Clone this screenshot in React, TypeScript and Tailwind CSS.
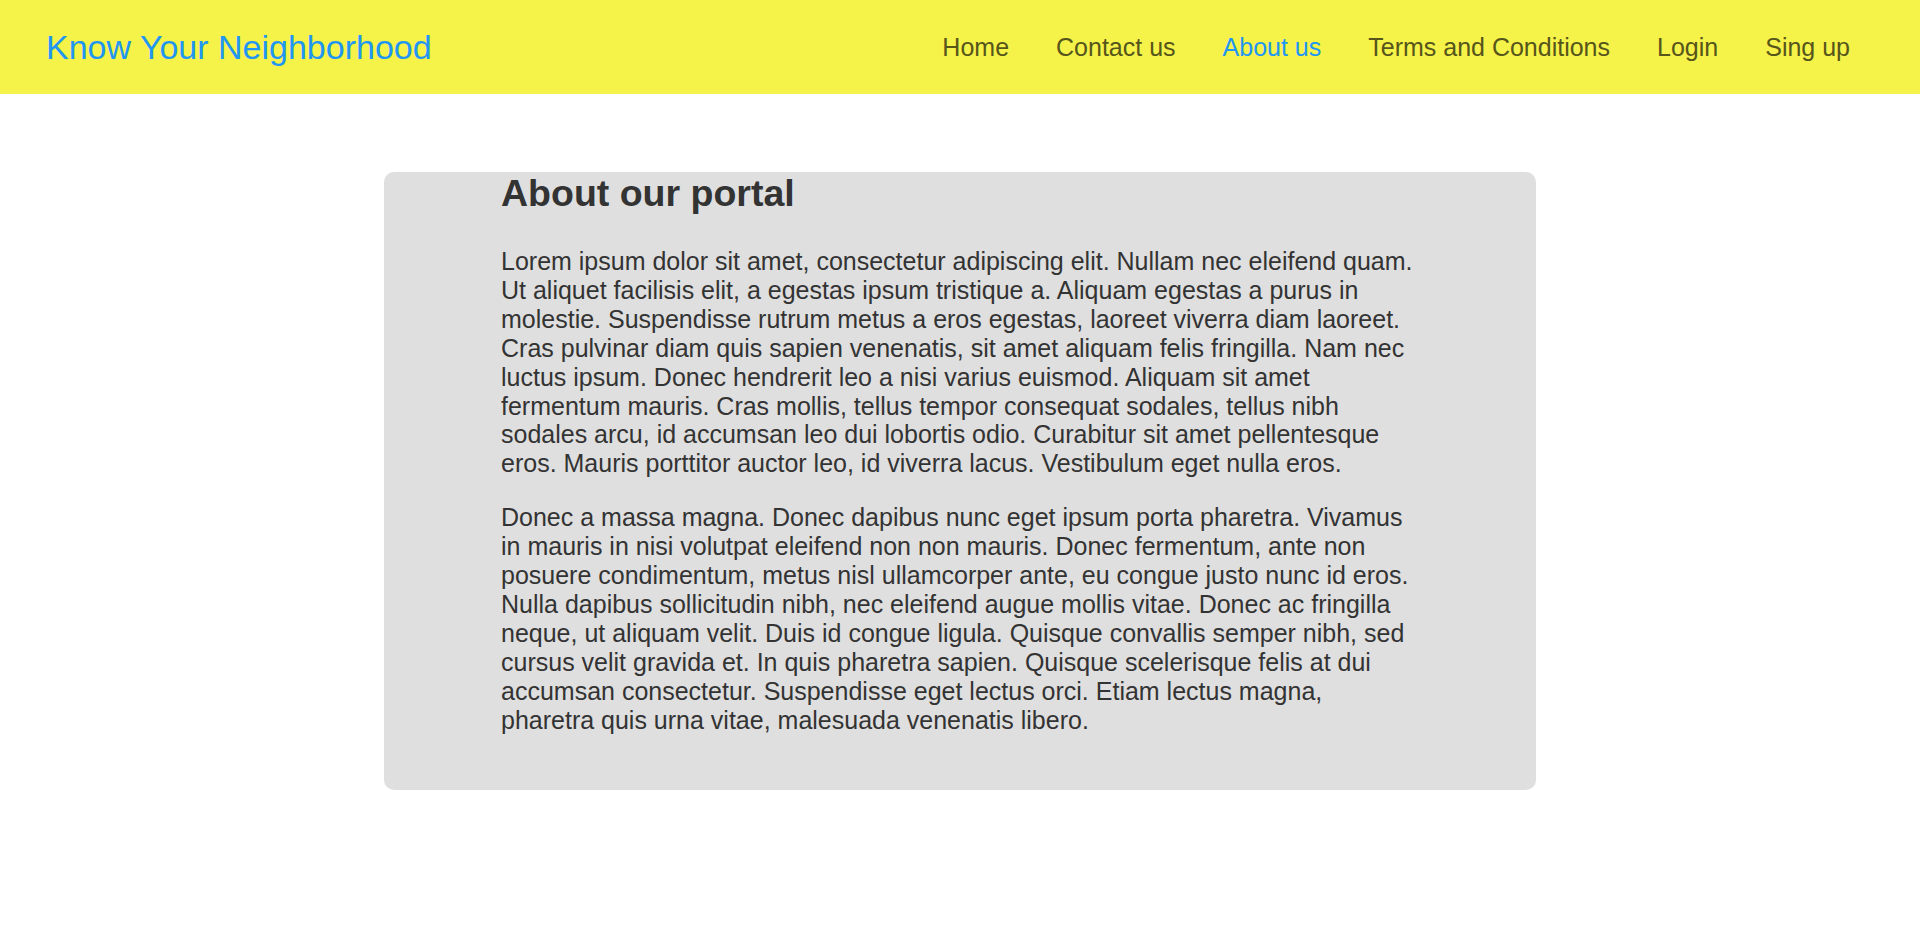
import React from "react";

const navItems = [
  { label: "Home", active: false },
  { label: "Contact us", active: false },
  { label: "About us", active: true },
  { label: "Terms and Conditions", active: false },
  { label: "Login", active: false },
  { label: "Sing up", active: false },
];

export default function App() {
  return (
    <div className="min-h-screen bg-white font-['Liberation_Sans',Arial,sans-serif] leading-[normal]">
      <header className="h-[94px] bg-[#f5f24a] flex items-center justify-between pl-[46px] pr-[70px]">
        <a href="#" className="text-[34px] text-[#2196f3]">
          Know Your Neighborhood
        </a>
        <nav className="flex items-center gap-[47px] text-[25px]">
          {navItems.map((item) => (
            <a
              key={item.label}
              href="#"
              className={item.active ? "text-[#2196f3]" : "text-[#56551a]"}
            >
              {item.label}
            </a>
          ))}
        </nav>
      </header>

      <main className="w-[60%] mx-auto mt-[78px] bg-[#dfdfdf] rounded-[10px] pb-[55px]">
        <div className="ml-[117px] w-[915px] text-[#333333]">
          <h2 className="text-[37.5px] font-bold">About our portal</h2>
          <p className="mt-[32px] text-[25px] leading-[28.9px]">
            Lorem ipsum dolor sit amet, consectetur adipiscing elit. Nullam nec eleifend quam. Ut aliquet facilisis elit, a egestas ipsum tristique a. Aliquam egestas a purus in molestie. Suspendisse rutrum metus a eros egestas, laoreet viverra diam laoreet. Cras pulvinar diam quis sapien venenatis, sit amet aliquam felis fringilla. Nam nec luctus ipsum. Donec hendrerit leo a nisi varius euismod. Aliquam sit amet fermentum mauris. Cras mollis, tellus tempor consequat sodales, tellus nibh sodales arcu, id accumsan leo dui lobortis odio. Curabitur sit amet pellentesque eros. Mauris porttitor auctor leo, id viverra lacus. Vestibulum eget nulla eros.
          </p>
          <p className="mt-[25px] text-[25px] leading-[28.9px]">
            Donec a massa magna. Donec dapibus nunc eget ipsum porta pharetra. Vivamus in mauris in nisi volutpat eleifend non non mauris. Donec fermentum, ante non posuere condimentum, metus nisl ullamcorper ante, eu congue justo nunc id eros. Nulla dapibus sollicitudin nibh, nec eleifend augue mollis vitae. Donec ac fringilla neque, ut aliquam velit. Duis id congue ligula. Quisque convallis semper nibh, sed cursus velit gravida et. In quis pharetra sapien. Quisque scelerisque felis at dui accumsan consectetur. Suspendisse eget lectus orci. Etiam lectus magna, pharetra quis urna vitae, malesuada venenatis libero.
          </p>
        </div>
      </main>
    </div>
  );
}
